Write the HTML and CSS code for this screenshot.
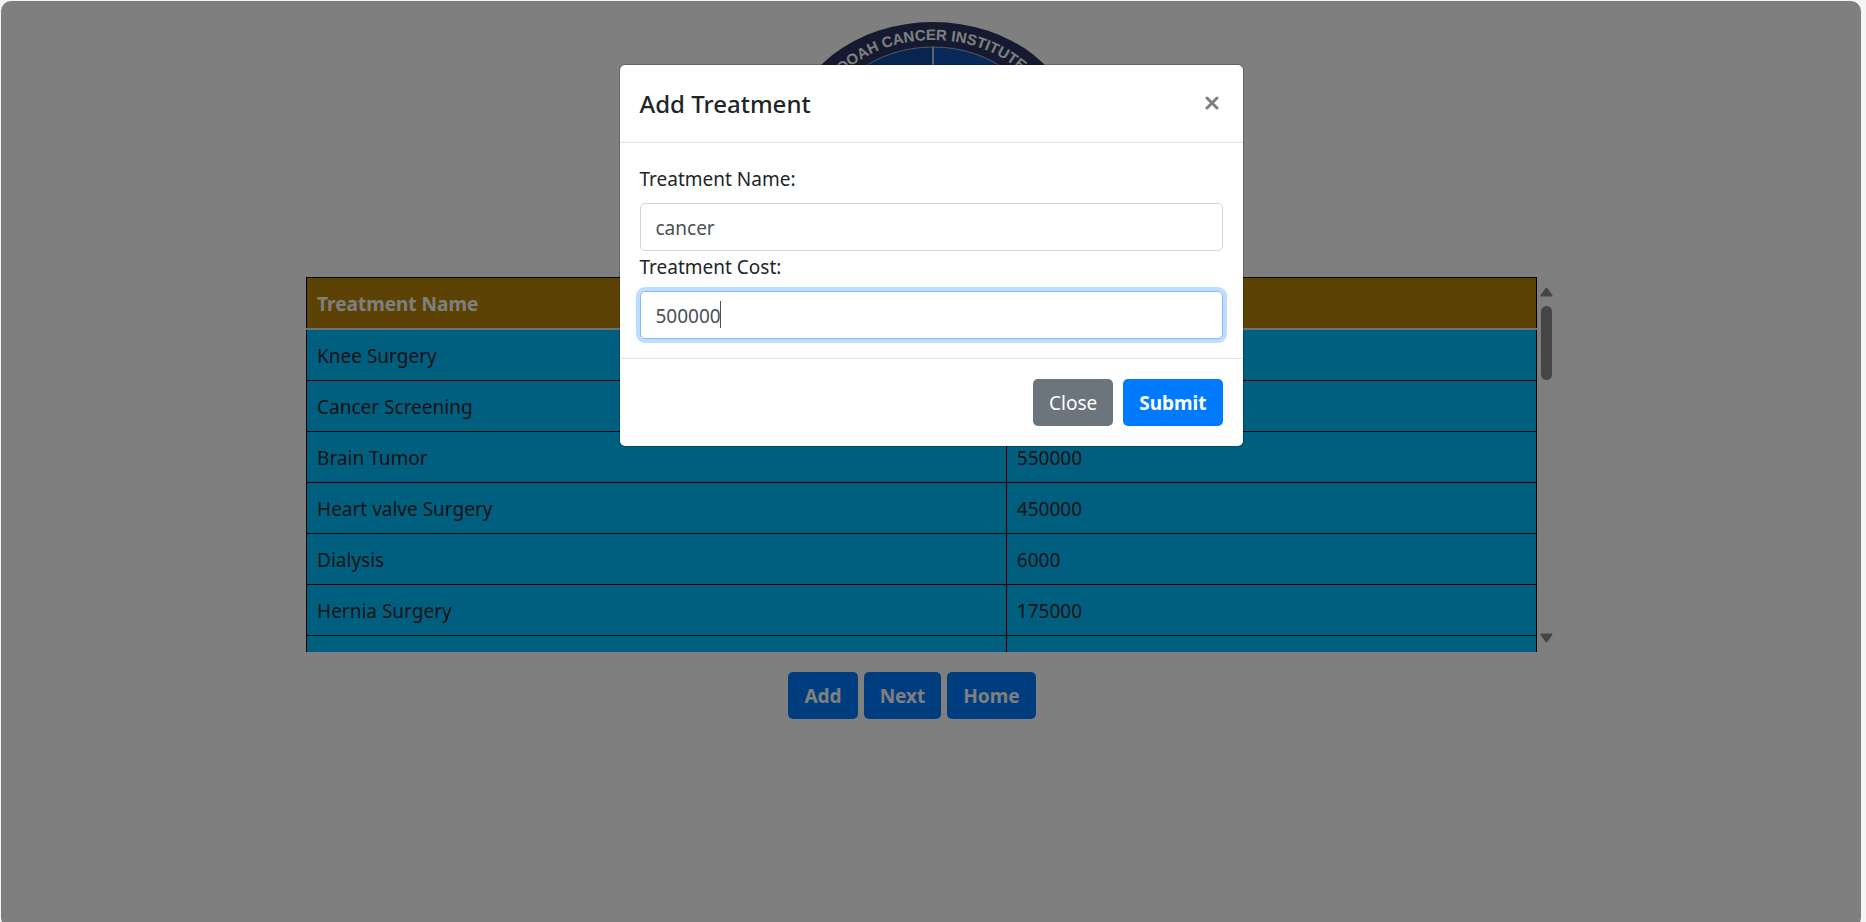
FILE: index.html
```html
<!DOCTYPE html>
<html lang="en">
<head>
<meta charset="utf-8">
<title>Treatments</title>
<link rel="stylesheet" href="styles.css">
</head>
<body>
<div class="page">
  <main class="content">
    <svg class="logo" viewBox="0 0 284 236" role="img" aria-label="Borooah Cancer Institute">
      <defs>
        <path id="ring" d="M24 112A118 94 0 0 1 260 112"/>
        <clipPath id="inner"><ellipse cx="142" cy="112" rx="108" ry="87"/></clipPath>
      </defs>
      <ellipse cx="142" cy="112" rx="142" ry="112" fill="#2a3560"/>
      <ellipse cx="142" cy="112" rx="108" ry="87" fill="#0f4a9c"/>
      <g clip-path="url(#inner)"><path d="M142 24h110v90H142z" fill="#1254b0"/></g>
      <ellipse cx="142" cy="112" rx="108" ry="87" fill="none" stroke="#9fb4d4" stroke-width="1"/>
      <path d="M142 25v174" stroke="#b9c6dc" stroke-width="2"/>
      <text class="logo-text"><textPath href="#ring" startOffset="45%" text-anchor="middle">BOROOAH CANCER INSTITUTE,</textPath></text>
    </svg>

    <div class="scroller">
      <table class="treatments">
        <thead><tr><th class="col-name">Treatment Name</th><th aria-label="Treatment Cost"></th></tr></thead>
        <tbody>
          <tr><td>Knee Surgery</td><td></td></tr>
          <tr><td>Cancer Screening</td><td></td></tr>
          <tr><td>Brain Tumor</td><td>550000</td></tr>
          <tr><td>Heart valve Surgery</td><td>450000</td></tr>
          <tr><td>Dialysis</td><td>6000</td></tr>
          <tr><td>Hernia Surgery</td><td>175000</td></tr>
          <tr><td></td><td></td></tr>
        </tbody>
      </table>
      <div class="scrollbar">
        <svg class="arrow" viewBox="0 0 13 10"><path d="M6.500 1.500L11.500 8.500H1.500z"/></svg>
        <div class="thumb"></div>
        <svg class="arrow arrow-down" viewBox="0 0 13 10"><path d="M6.500 8.500L11.500 1.500H1.500z"/></svg>
      </div>
    </div>

    <div class="actions">
      <button class="btn btn-primary" type="button">Add</button>
      <button class="btn btn-primary" type="button">Next</button>
      <button class="btn btn-primary" type="button">Home</button>
    </div>
  </main>

  <div class="backdrop">
    <form class="modal" role="dialog" aria-labelledby="modal-title">
      <header class="modal-header">
        <h5 class="modal-title" id="modal-title">Add Treatment</h5>
        <button class="close" type="button" aria-label="Close dialog">
          <svg class="close-icon" viewBox="0 0 14 14"><path d="M2 2L12 12M12 2L2 12"/></svg>
        </button>
      </header>
      <div class="modal-body">
        <label class="label" for="name">Treatment Name:</label>
        <input class="input" id="name" type="text" value="cancer">
        <label class="label" for="cost">Treatment Cost:</label>
        <div class="field">
          <input class="input input-active" id="cost" type="text" value="500000">
          <span class="caret"></span>
        </div>
      </div>
      <footer class="modal-footer">
        <button class="btn btn-secondary" type="button">Close</button>
        <button class="btn btn-primary" type="submit">Submit</button>
      </footer>
    </form>
  </div>
</div>
</body>
</html>
```
FILE: styles.css
```css
* { box-sizing: border-box; }

html {
  height: 100%;
  overflow: hidden;
  background: #f5f5f5;
}

body {
  margin: 0;
  color: #212529;
  font: 19px/30px "Noto Sans", "Open Sans", sans-serif;
}

.page {
  position: relative;
  height: calc(100vh + 5px);
  margin: 1px 5px 0 1px;
  overflow: hidden;
  border-radius: 10px;
  background: #fff;
}

.content {
  display: flex;
  flex-direction: column;
  align-items: center;
  padding-top: 21px;
}

.logo {
  display: block;
  width: 284px;
  height: 236px;
  margin-left: 4px;
}

.logo-text {
  fill: #fff;
  font: bold 15px "Liberation Sans", Arial, sans-serif;
}

.scroller {
  display: flex;
  width: 67.2%;
  height: 375px;
  margin: 19px 0 20px;
  overflow: hidden;
}

.treatments {
  flex: 1;
  align-self: flex-start;
  table-layout: fixed;
  border-collapse: collapse;
}

.treatments th,
.treatments td {
  height: 51px;
  padding: 11px 10px 9px;
  border: 1px solid #000;
  text-align: left;
}

.treatments th {
  border-bottom: 2px solid #dee2e6;
  background: #b8860b;
  color: #fff;
}

.treatments td { background: #00bfff; }

.treatments .col-name { width: 56.9%; }

.scrollbar {
  display: flex;
  flex-direction: column;
  align-items: center;
  width: 19px;
  padding: 10px 0 9px;
  background: #fcfcfc;
}

.arrow {
  width: 13px;
  height: 10px;
  fill: #8b8b8b;
  stroke: #8b8b8b;
  stroke-width: 2;
  stroke-linejoin: round;
}

.arrow-down { margin-top: auto; }

.thumb {
  width: 11px;
  height: 74px;
  margin-top: 9px;
  border-radius: 6px;
  background: #8b8b8b;
}

.actions {
  display: flex;
  gap: 6px;
  margin-right: 38px;
}

.btn {
  height: 47px;
  padding: 1px 16px 0;
  border: 0;
  border-radius: 5px;
  color: #fff;
  font: inherit;
}

.btn-primary {
  background: #007bff;
  font-weight: 700;
}

.btn-secondary { background: #6c757d; }

.backdrop {
  position: absolute;
  inset: 0;
  padding-top: 63px;
  background: rgba(0, 0, 0, 0.5);
}

.modal {
  width: 625px;
  margin: 0 auto;
  border: 1px solid rgba(0, 0, 0, 0.2);
  border-radius: 6px;
  background: #fff;
  background-clip: padding-box;
}

.modal-header {
  display: flex;
  align-items: flex-start;
  justify-content: space-between;
  padding: 20px;
  border-bottom: 1px solid #dee2e6;
}

.modal-title {
  margin: 0;
  font-size: 24px;
  font-weight: 500;
  line-height: 37px;
}

.close {
  display: flex;
  padding: 11px 4px;
  border: 0;
  background: none;
}

.close-icon {
  width: 14px;
  height: 14px;
  fill: none;
  stroke: #7f7f7f;
  stroke-width: 3;
  stroke-linecap: round;
}

.modal-body { padding: 20px 20px 19px; }

.label {
  display: block;
  padding-top: 1px;
  margin-bottom: 9px;
}

.input {
  display: block;
  width: 100%;
  height: 48px;
  padding: 2px 15px 0;
  border: 1px solid #ced4da;
  border-radius: 5px;
  background: #fff;
  color: #495057;
  font: inherit;
}

.field { position: relative; }

.input-active {
  border-color: #80bdff;
  box-shadow: 0 0 0 4px #bfdeff;
}

.caret {
  position: absolute;
  top: 10px;
  left: 80px;
  width: 1px;
  height: 27px;
  background: #495057;
}

.modal-footer {
  display: flex;
  justify-content: flex-end;
  gap: 10px;
  padding: 20px;
  border-top: 1px solid #dee2e6;
}
```
